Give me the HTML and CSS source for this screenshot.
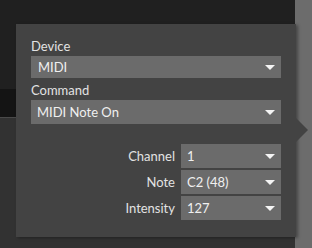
FILE: index.html
```html
<!DOCTYPE html>
<html lang="en">
<head>
    <meta charset="UTF-8">
    <meta name="viewport" content="width=device-width, initial-scale=1.0">
    <title>MIDI Command</title>
    <link rel="stylesheet" href="styles.css">
</head>
<body>
    <div class="app">
        <div class="main">
            <div class="toolbar"></div>
            <div class="band"></div>
            <div class="workspace"></div>
        </div>
        <div class="sidebar"></div>
    </div>

    <div class="popover">
        <div class="field-label">Device</div>
        <div class="select">
            <span>MIDI</span>
            <span class="caret"></span>
        </div>

        <div class="field-label">Command</div>
        <div class="select select-tall">
            <span>MIDI Note On</span>
            <span class="caret"></span>
        </div>

        <div class="params">
            <div class="param-label">Channel</div>
            <div class="select">
                <span>1</span>
                <span class="caret"></span>
            </div>

            <div class="param-label">Note</div>
            <div class="select">
                <span>C2 (48)</span>
                <span class="caret"></span>
            </div>

            <div class="param-label">Intensity</div>
            <div class="select">
                <span>127</span>
                <span class="caret"></span>
            </div>
        </div>
    </div>
</body>
</html>
```

FILE: styles.css
```css
html, body {
    margin: 0;
    height: 100%;
}
body {
    font-family: Lato, "Open Sans", Arial, sans-serif;
    font-size: 13px;
    color: #f0f0f0;
    background-color: #202020;
    overflow: hidden;
}
.app {
    display: grid;
    grid-template-columns: 1fr 17px;
    height: 100%;
}
.main {
    display: flex;
    flex-direction: column;
}
.toolbar {
    height: 89px;
    background-color: #202020;
}
.band {
    height: 28px;
    background-color: #141414;
    border-bottom: 1px solid #4a4a4a;
}
.workspace {
    flex: 1;
    background-color: #323232;
}
.sidebar {
    background-color: #6c6c6c;
}

/* popup */
.popover {
    position: absolute;
    left: 16px;
    top: 24px;
    width: 250px;
    padding: 14px 15px 17px;
    background-color: #434343;
    box-shadow: 2px 1px 3px rgba(0,0,0,0.35);
}
.popover::after {
    content: "";
    position: absolute;
    right: -12px;
    top: 94px;
    border-top: 12px solid transparent;
    border-bottom: 12px solid transparent;
    border-left: 12px solid #434343;
}
.field-label {
    line-height: 16px;
    color: #e2e2e2;
    margin-bottom: 2px;
}
.select + .field-label {
    margin-top: 4px;
}
.select {
    display: flex;
    align-items: center;
    justify-content: space-between;
    height: 22px;
    padding: 0 6px 0 7px;
    background-color: #6b6b6b;
    line-height: 22px;
}
.select-tall {
    height: 24px;
    padding-left: 6px;
}
.caret {
    width: 0;
    height: 0;
    border-left: 5px solid transparent;
    border-right: 5px solid transparent;
    border-top: 5px solid #f4f4f4;
}
.params {
    display: grid;
    grid-template-columns: auto 100px;
    justify-content: end;
    column-gap: 6px;
    row-gap: 2px;
    margin-top: 20px;
}
.params .select {
    height: 24px;
    padding-left: 6px;
}
.param-label {
    align-self: center;
    text-align: right;
    color: #e2e2e2;
}
```
